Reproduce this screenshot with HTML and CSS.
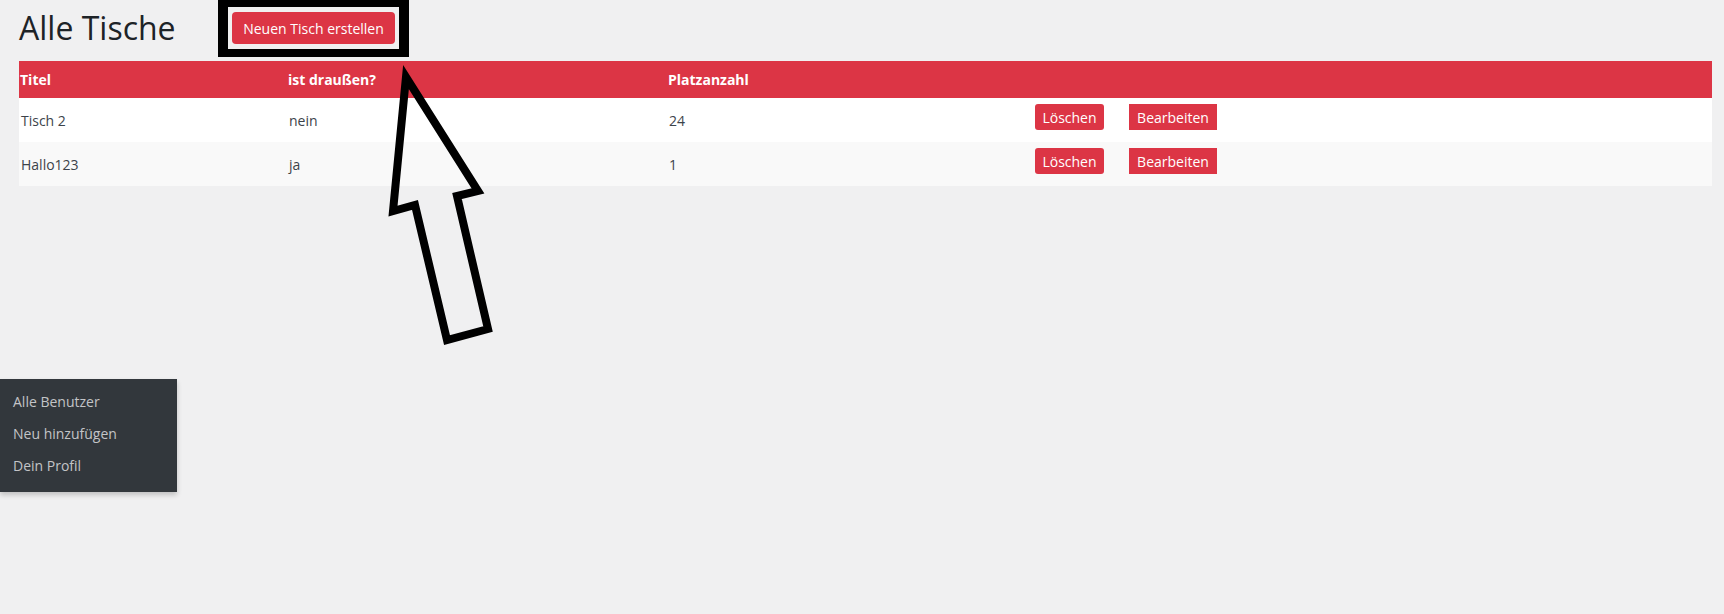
FILE: index.html
```html
<!DOCTYPE html>
<html lang="de">
<head>
<meta charset="utf-8">
<title>Alle Tische</title>
<link rel="stylesheet" href="styles.css">
</head>
<body>
<div class="page">
  <div class="head">
    <h1 class="title">Alle Tische</h1>
    <div class="annot">
      <button class="btn btn-new">Neuen Tisch erstellen</button>
    </div>
  </div>
  <table class="tbl">
    <colgroup>
      <col class="c1">
      <col class="c2">
      <col class="c3">
      <col class="c4">
    </colgroup>
    <thead>
      <tr>
        <th>Titel</th>
        <th>ist draußen?</th>
        <th>Platzanzahl</th>
        <th></th>
      </tr>
    </thead>
    <tbody>
      <tr>
        <td>Tisch 2</td>
        <td>nein</td>
        <td>24</td>
        <td><div class="actions"><button class="btn btn-del">Löschen</button><button class="btn btn-edit">Bearbeiten</button></div></td>
      </tr>
      <tr class="alt">
        <td>Hallo123</td>
        <td>ja</td>
        <td>1</td>
        <td><div class="actions"><button class="btn btn-del">Löschen</button><button class="btn btn-edit">Bearbeiten</button></div></td>
      </tr>
    </tbody>
  </table>
</div>

<svg class="arrow" width="120" height="300" viewBox="380 60 120 300" xmlns="http://www.w3.org/2000/svg">
  <polygon points="406,77 393,211 415,205 447,340 488,329 457,196 478,191" fill="none" stroke="#000" stroke-width="8" stroke-linejoin="miter"/>
</svg>

<nav class="flyout">
  <a class="fly-item">Alle Benutzer</a>
  <a class="fly-item">Neu hinzufügen</a>
  <a class="fly-item">Dein Profil</a>
</nav>
</body>
</html>
```

FILE: styles.css
```css
html, body {
  margin: 0;
  padding: 0;
}
body {
  background: #f0f0f1;
  font-family: "Open Sans", "Noto Sans", sans-serif;
  color: #3c434a;
  font-size: 14px;
  width: 1724px;
  height: 614px;
  overflow: hidden;
  position: relative;
}
.page {
  padding: 0 12px 0 19px;
}
.head {
  display: flex;
  align-items: flex-start;
  height: 57px;
}
.title {
  margin: 8px 0 0 0;
  font-weight: 400;
  font-size: 32px;
  line-height: 40px;
  color: #1d2327;
  width: 199px;
}
.annot {
  border-style: solid;
  border-color: #000;
  border-width: 7px 10px 8px 10px;
  padding: 5px 4px;
  background: #f0f0f1;
}
.btn {
  font-family: "Open Sans", "Noto Sans", sans-serif;
  border: none;
  background: #dc3545;
  color: #fff;
  cursor: pointer;
  padding: 0;
}
.btn-new {
  display: block;
  width: 163px;
  height: 32px;
  border-radius: 4px;
  font-size: 14px;
}
.tbl {
  margin-top: 4px;
  width: 1693px;
  border-collapse: collapse;
  table-layout: fixed;
}
.c1 { width: 268px; }
.c2 { width: 380px; }
.c3 { width: 366px; }
.c4 { width: 679px; }
.tbl th {
  background: #dc3545;
  color: #fff;
  text-align: left;
  font-weight: 700;
  height: 37px;
  padding: 0 0 0 1px;
  font-size: 14px;
}
.tbl td {
  background: #fff;
  height: 44px;
  padding: 0 0 0 2px;
  font-size: 14px;
}
.tbl tr.alt td {
  background: #f9f9f9;
}
.actions {
  display: flex;
  gap: 25px;
  padding-bottom: 6px;
}
.btn-del {
  width: 69px;
  height: 26px;
  border-radius: 3px;
  font-size: 14px;
}
.btn-edit {
  width: 88px;
  height: 26px;
  border-radius: 0;
  font-size: 14px;
}
.arrow {
  position: absolute;
  left: 380px;
  top: 60px;
}
.flyout {
  position: absolute;
  left: 0;
  top: 379px;
  width: 177px;
  height: 113px;
  box-sizing: border-box;
  padding: 7px 0 0 0;
  background: #32373c;
  box-shadow: 0 3px 5px rgba(0, 0, 0, 0.2);
  display: flex;
  flex-direction: column;
}
.fly-item {
  display: block;
  padding: 0 13px;
  line-height: 32px;
  font-size: 14px;
  color: #c3c4c7;
}
```
